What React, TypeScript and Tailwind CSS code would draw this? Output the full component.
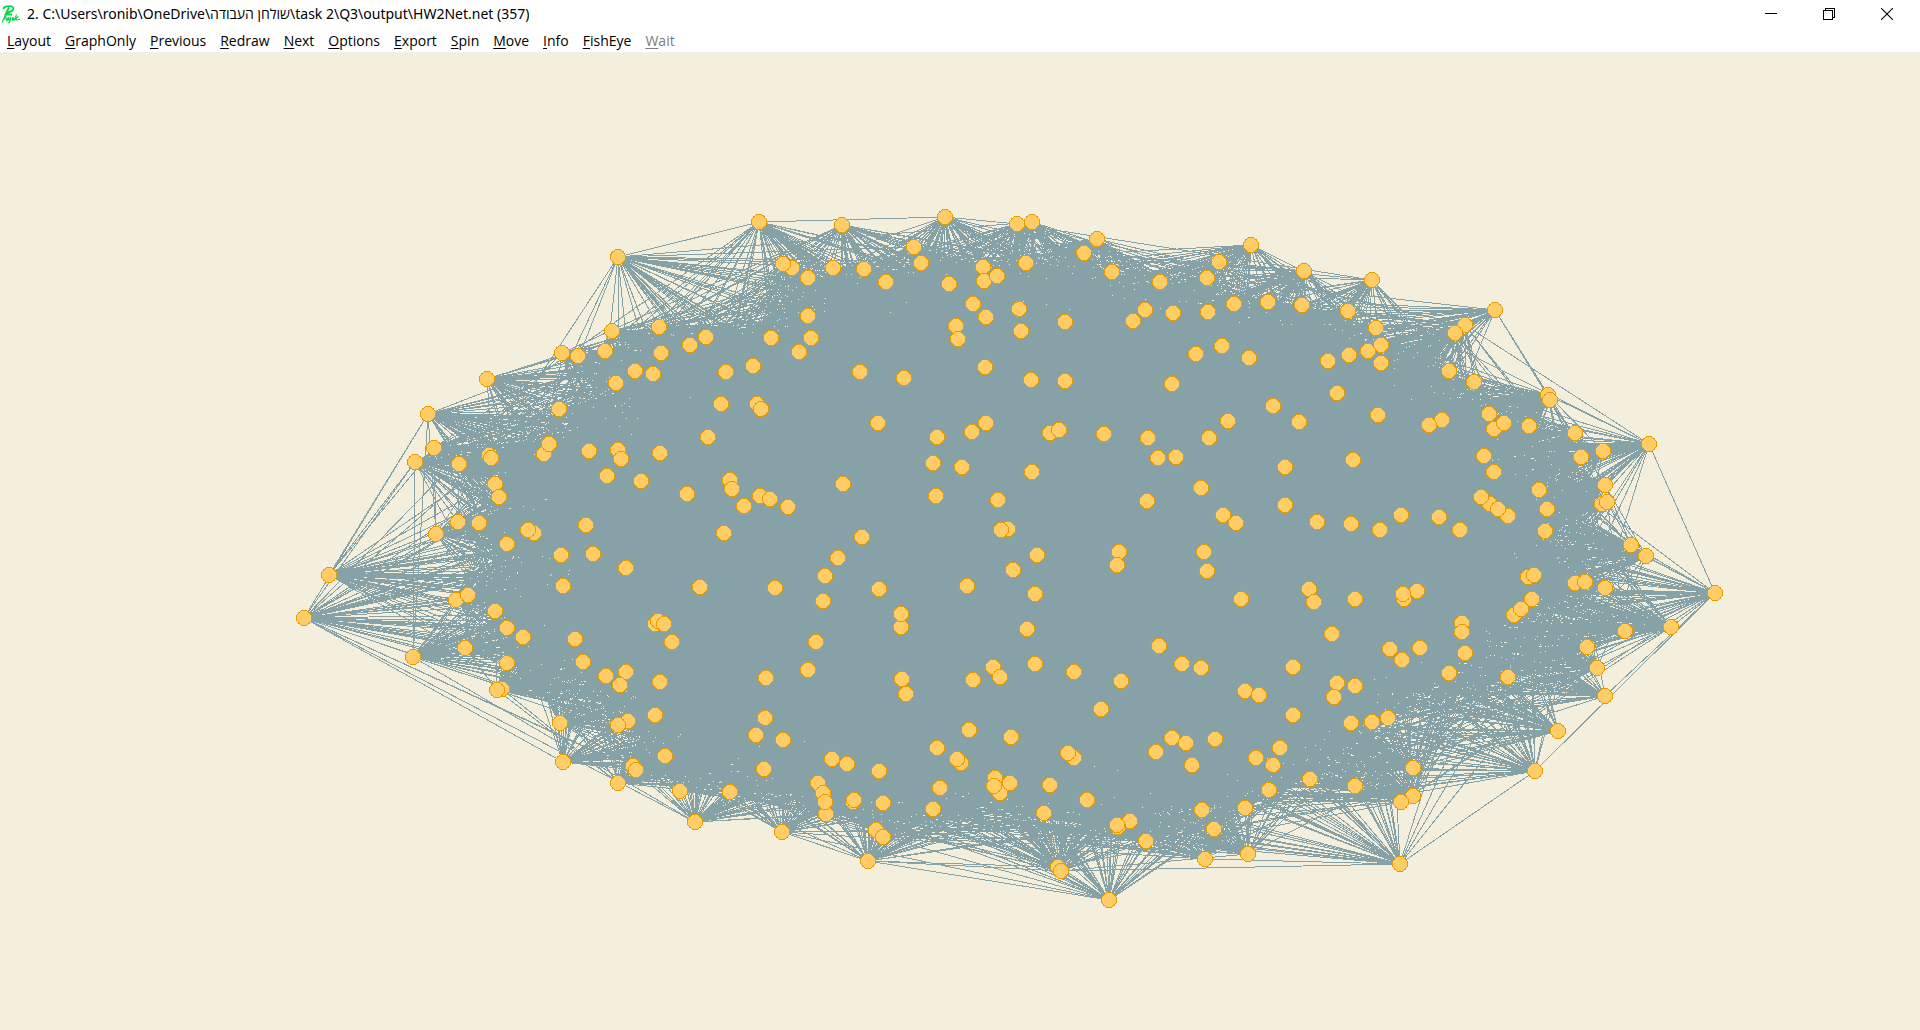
import { useMemo } from "react";

type Point = [number, number];

const NODES: Point[] = [
  [759, 222], [618, 257], [612, 331], [659, 327], [562, 353], [578, 356], [605, 351], [661, 353], [690, 345], [706, 337],
  [487, 379], [428, 414], [635, 371], [653, 374], [616, 383], [726, 372], [753, 366], [559, 409], [721, 404], [757, 404],
  [761, 409], [708, 437], [434, 448], [415, 462], [459, 464], [489, 455], [491, 458], [544, 454], [549, 444], [589, 451],
  [618, 450], [621, 459], [660, 453], [607, 476], [641, 481], [495, 484], [499, 497], [687, 494], [730, 480], [732, 489],
  [744, 506], [760, 496], [770, 499], [458, 522], [479, 523], [436, 534], [534, 533], [528, 530], [507, 544], [586, 525],
  [724, 533], [561, 555], [593, 554], [842, 225], [945, 217], [1017, 224], [1032, 222], [1097, 239], [1084, 253], [914, 247],
  [921, 263], [792, 268], [783, 264], [808, 278], [833, 268], [864, 269], [886, 282], [949, 284], [983, 267], [984, 281],
  [997, 276], [1026, 263], [1112, 272], [1160, 282], [1207, 278], [1219, 262], [973, 304], [986, 317], [1019, 309], [956, 326],
  [958, 339], [1021, 331], [1065, 322], [1133, 321], [1145, 310], [1173, 313], [1208, 312], [1234, 304], [808, 316], [771, 338],
  [811, 338], [799, 352], [860, 372], [904, 378], [985, 367], [1031, 380], [1065, 381], [1196, 354], [1222, 346], [1249, 358],
  [1172, 384], [878, 423], [937, 437], [972, 432], [986, 423], [1050, 433], [1059, 430], [1104, 434], [1148, 438], [1209, 438],
  [1228, 421], [1158, 458], [1176, 457], [933, 463], [962, 467], [1032, 472], [843, 484], [936, 496], [788, 507], [998, 500],
  [1147, 501], [1201, 488], [1223, 515], [1236, 523], [862, 537], [1008, 529], [1001, 530], [1037, 555], [1119, 552], [1204, 552],
  [1251, 245], [1304, 271], [1372, 280], [1268, 302], [1302, 305], [1348, 311], [1376, 328], [1495, 310], [1465, 325], [1455, 333],
  [1368, 351], [1381, 345], [1349, 355], [1328, 361], [1381, 363], [1449, 371], [1474, 382], [1337, 393], [1273, 406], [1299, 422],
  [1378, 415], [1442, 420], [1429, 425], [1548, 395], [1550, 400], [1489, 414], [1494, 429], [1504, 423], [1529, 426], [1575, 433],
  [1649, 444], [1581, 457], [1603, 451], [1353, 460], [1285, 467], [1484, 456], [1494, 472], [1539, 490], [1605, 485], [1602, 504],
  [1607, 502], [1547, 509], [1545, 531], [1285, 505], [1317, 522], [1351, 524], [1380, 530], [1401, 515], [1439, 517], [1460, 530],
  [1490, 504], [1481, 497], [1508, 516], [1498, 509], [1631, 545], [1646, 556], [329, 575], [304, 618], [413, 657], [456, 600],
  [468, 595], [495, 611], [507, 628], [523, 637], [465, 648], [507, 663], [502, 689], [497, 690], [563, 586], [626, 568],
  [700, 587], [575, 639], [583, 662], [606, 676], [626, 672], [620, 685], [655, 624], [658, 621], [664, 624], [672, 642],
  [660, 682], [655, 715], [628, 721], [618, 725], [560, 723], [563, 762], [618, 783], [633, 766], [636, 770], [665, 756],
  [680, 791], [695, 822], [730, 792], [756, 735], [765, 718], [766, 678], [764, 769], [775, 588], [838, 558], [825, 576],
  [823, 601], [879, 589], [901, 627], [901, 614], [967, 586], [1013, 570], [1035, 594], [1027, 629], [1117, 565], [1207, 571],
  [1241, 599], [816, 642], [808, 670], [902, 679], [906, 694], [973, 680], [993, 667], [1000, 677], [1035, 664], [1074, 672],
  [1121, 681], [1101, 709], [1159, 646], [1182, 664], [1201, 668], [1245, 691], [783, 740], [832, 759], [847, 764], [879, 771],
  [937, 748], [969, 730], [1011, 737], [961, 763], [957, 759], [1074, 758], [1068, 753], [1156, 752], [1172, 738], [1186, 743],
  [1215, 739], [1192, 765], [818, 783], [823, 793], [826, 814], [825, 802], [853, 802], [854, 800], [883, 803], [940, 788],
  [933, 809], [995, 778], [1000, 793], [994, 786], [1010, 783], [1050, 785], [1044, 813], [1087, 800], [1202, 810], [1245, 808],
  [1130, 821], [1118, 827], [1117, 825], [1146, 841], [1214, 829], [1205, 859], [1248, 854], [782, 832], [876, 830], [883, 837],
  [868, 861], [1058, 867], [1061, 871], [1109, 900], [1309, 589], [1314, 602], [1355, 599], [1404, 599], [1417, 591], [1403, 594],
  [1332, 634], [1293, 667], [1337, 683], [1355, 686], [1334, 697], [1259, 695], [1293, 715], [1351, 723], [1372, 722], [1388, 718],
  [1390, 649], [1402, 660], [1420, 648], [1462, 623], [1462, 632], [1465, 653], [1449, 673], [1508, 677], [1528, 577], [1534, 575],
  [1532, 599], [1514, 615], [1521, 609], [1575, 583], [1585, 582], [1605, 588], [1715, 593], [1671, 627], [1625, 631], [1587, 647],
  [1597, 668], [1605, 696], [1558, 731], [1535, 771], [1400, 864], [1413, 796], [1401, 802], [1413, 768], [1355, 786], [1310, 779],
  [1269, 790], [1280, 748], [1256, 758], [1273, 765],
];

/* Outline of the network; only the rim edges below run outside it. */
const HULL: Point[] = [
  [300, 618], [325, 572], [411, 460], [424, 411], [475, 393], [485, 375], [538, 358], [614, 253], [759, 218], [842, 219],
  [945, 213], [1034, 218], [1098, 234], [1177, 246], [1252, 241], [1373, 275], [1499, 306], [1553, 391], [1653, 440], [1719, 593],
  [1675, 636], [1609, 702], [1538, 776], [1400, 869], [1207, 868], [1109, 904], [866, 865], [780, 837], [755, 826], [695, 827],
  [561, 766],
];

const RIM_EDGES: [Point, Point][] = [
  [[415, 462], [413, 657]], [[428, 414], [413, 657]], [[428, 414], [304, 618]], [[415, 462], [304, 618]],
  [[428, 414], [329, 575]], [[415, 462], [329, 575]], [[618, 257], [436, 534]], [[618, 257], [759, 222]],
  [[759, 222], [945, 217]], [[1495, 310], [1548, 395]], [[1495, 310], [1550, 400]], [[1465, 325], [1649, 444]],
  [[1548, 395], [1649, 444]], [[1649, 444], [1715, 593]], [[1715, 593], [1605, 696]], [[1715, 593], [1535, 771]],
  [[1535, 771], [1400, 864]], [[1205, 859], [1400, 864]], [[868, 861], [1109, 900]], [[304, 618], [563, 762]],
];

function insideHull(x: number, y: number): boolean {
  let inside = false;
  for (let i = 0, j = HULL.length - 1; i < HULL.length; j = i++) {
    const [xi, yi] = HULL[i];
    const [xj, yj] = HULL[j];
    if (yi > y !== yj > y && x < ((xj - xi) * (y - yi)) / (yj - yi) + xi) inside = !inside;
  }
  return inside;
}

function chordInside(a: Point, b: Point): boolean {
  for (let k = 1; k < 12; k++) {
    const t = k / 12;
    if (!insideHull(a[0] + (b[0] - a[0]) * t, a[1] + (b[1] - a[1]) * t)) return false;
  }
  return true;
}

/* 0 at the centre of the drawing, about 1 on its rim. */
function rim([x, y]: Point): number {
  return Math.min(1, Math.hypot((x - 1010) / 700, (y - 560) / 345));
}

function buildEdges(): string {
  let seed = 20357;
  const random = () => {
    seed = (Math.imul(seed, 1664525) + 1013904223) >>> 0;
    return seed / 4294967296;
  };
  const parts: string[] = RIM_EDGES.map(([a, b]) => `M${a[0]} ${a[1]}L${b[0]} ${b[1]}`);
  for (let i = 0; i < NODES.length; i++) {
    for (let j = i + 1; j < NODES.length; j++) {
      const a = NODES[i];
      const b = NODES[j];
      const chance = 0.52 * (1 - 0.55 * rim(a)) * (1 - 0.55 * rim(b));
      if (random() < chance && chordInside(a, b)) parts.push(`M${a[0]} ${a[1]}L${b[0]} ${b[1]}`);
    }
  }
  return parts.join("");
}

const MENU = ["Layout", "GraphOnly", "Previous", "Redraw", "Next", "Options", "Export", "Spin", "Move", "Info", "FishEye", "Wait"];

function PajekLogo() {
  return (
    <svg viewBox="0 0 20 20" className="size-5" fill="none" stroke="#00d84a" aria-hidden="true">
      <path d="M2.500 5C2.500 2.500 8 1.500 11 2.500C14 4 12 8 6 8.500M8 3.500L4.500 10.500H11" strokeWidth="1.800" />
      <path
        d="M4.500 11L1 18.500M3 13.500C6 11.500 6 15 2.500 15.500M8 13.500C5.500 14 5 17 6 16.500C7.500 16 8 14 8 13.500V16.500M10 13L8.500 18.500L7 19M11 15.500C13.500 14 12.500 12.500 11.500 14.500C10.500 17 12 16.500 13.500 15M15.500 10.500L13.500 16.500M17.500 12.500L14.500 14.500L16.500 16.500M17 15.500H19"
        strokeWidth="1.200"
      />
    </svg>
  );
}

function TitleBar() {
  return (
    <header className="flex h-7 items-center bg-white pr-1">
      <div className="flex min-w-0 flex-1 items-center gap-1.5 pl-px">
        <PajekLogo />
        <h1 className="truncate font-['Noto_Sans','Open_Sans',sans-serif] text-[14px] leading-5">
          2. C:\Users\ronib\OneDrive\שולחן העבודה\task 2\Q3\output\HW2Net.net (357)
        </h1>
      </div>
      <button type="button" aria-label="Minimize" className="flex h-7 w-[58px] items-center justify-center">
        <svg viewBox="0 0 12 12" className="size-3" stroke="black" shapeRendering="crispEdges"><path d="M0 5.500H12" /></svg>
      </button>
      <button type="button" aria-label="Restore" className="flex h-7 w-[58px] items-center justify-center">
        <svg viewBox="0 0 12 12" className="size-3" fill="none" stroke="black" shapeRendering="crispEdges">
          <path d="M0.500 2.500H9.500V11.500H0.500ZM2.500 2.500V0.500H11.500V9.500H9.500" />
        </svg>
      </button>
      <button type="button" aria-label="Close" className="flex h-7 w-[58px] items-center justify-center">
        <svg viewBox="0 0 12 12" className="size-3" stroke="black" strokeWidth="1.100"><path d="M0 0L12 12M12 0L0 12" /></svg>
      </button>
    </header>
  );
}

function MenuBar() {
  return (
    <nav className="flex h-[25px] items-end border-b border-[#f0f0f0] bg-white pb-px">
      {MENU.map((label) => (
        <button
          key={label}
          type="button"
          disabled={label === "Wait"}
          className="px-[7px] text-[14px] leading-5 disabled:text-[#7c7c7c]"
        >
          <span className="underline underline-offset-2">{label[0]}</span>
          {label.slice(1)}
        </button>
      ))}
    </nav>
  );
}

function Network() {
  const edges = useMemo(buildEdges, []);
  return (
    <svg viewBox="0 53 1920 977" className="h-full w-full" shapeRendering="crispEdges" role="img" aria-label="HW2Net network">
      <path d={edges} fill="none" stroke="#86a2a7" strokeWidth="1" />
      <g fill="#ffcc66" stroke="#e69b00" strokeWidth="1">
        {NODES.map(([x, y], i) => (
          <circle key={i} cx={x} cy={y} r="7.500" />
        ))}
      </g>
    </svg>
  );
}

export default function App() {
  return (
    <div className="flex h-screen flex-col overflow-hidden bg-[#f4eedc] font-['Open_Sans','Noto_Sans',sans-serif] text-black">
      <TitleBar />
      <MenuBar />
      <main className="min-h-0 flex-1">
        <Network />
      </main>
    </div>
  );
}
